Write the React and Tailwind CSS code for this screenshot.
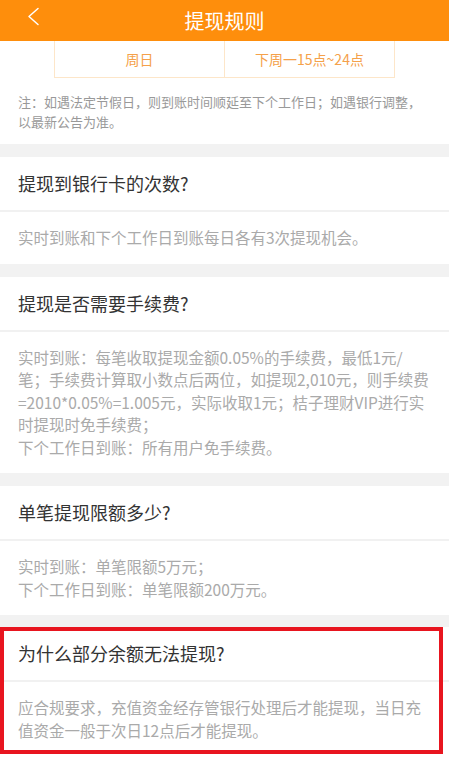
import React from "react";

const font = { fontFamily: '"PingFang SC", "Noto Sans CJK SC", sans-serif' };

function Section({ title, lines }) {
  return (
    <div className="bg-white">
      <div className="h-[55px] flex items-center px-[18px] text-[18px] text-[#333] border-b-2 border-[#f1f1f1]">
        {title}
      </div>
      <div className="px-[18px] pt-[14px] pb-[15px] text-[15.5px] leading-[22.5px] text-[#aaa]">
        {lines.map((line, i) => (
          <div key={i} className="whitespace-nowrap">{line}</div>
        ))}
      </div>
    </div>
  );
}

export default function App() {
  return (
    <div className="w-[449px] min-h-[764px] bg-white" style={font}>
      <div className="relative h-[41px] bg-[#fe8e0c] flex items-center justify-center">
        <svg className="absolute left-[27px] top-[7px]" width="13" height="19" viewBox="0 0 13 19" fill="none">
          <polyline points="11,1.5 2,9.5 11,17.5" stroke="#fff" strokeWidth="1.5" strokeLinecap="round" strokeLinejoin="round" />
        </svg>
        <span className="text-[20px] text-white">提现规则</span>
      </div>

      <div className="bg-white pb-[12px]">
        <div className="ml-[54px] w-[341px] h-[37px] flex border border-t-0 border-[#fde6c9] text-[14px] text-[#f5a14a]">
          <div className="w-[170px] flex items-center justify-center border-r border-[#fde6c9]">周日</div>
          <div className="flex-1 flex items-center justify-center">下周一15点~24点</div>
        </div>
        <div className="mt-[14px] px-[18px] text-[13px] leading-[20px] text-[#999]">
          <div className="whitespace-nowrap">注：如遇法定节假日，则到账时间顺延至下个工作日；如遇银行调整，</div>
          <div className="whitespace-nowrap">以最新公告为准。</div>
        </div>
      </div>

      <div className="h-[13px] bg-[#f2f2f2]" />
      <Section title="提现到银行卡的次数?" lines={["实时到账和下个工作日到账每日各有3次提现机会。"]} />

      <div className="h-[13px] bg-[#f2f2f2]" />
      <Section
        title="提现是否需要手续费?"
        lines={[
          "实时到账：每笔收取提现金额0.05%的手续费，最低1元/",
          "笔；手续费计算取小数点后两位，如提现2,010元，则手续费",
          "=2010*0.05%=1.005元，实际收取1元；桔子理财VIP进行实",
          "时提现时免手续费；",
          "下个工作日到账：所有用户免手续费。",
        ]}
      />

      <div className="h-[13px] bg-[#f2f2f2]" />
      <Section
        title="单笔提现限额多少?"
        lines={["实时到账：单笔限额5万元；", "下个工作日到账：单笔限额200万元。"]}
      />

      <div className="h-[12px] bg-[#f2f2f2]" />
      <div className="relative">
        <Section
          title="为什么部分余额无法提现?"
          lines={["应合规要求，充值资金经存管银行处理后才能提现，当日充", "值资金一般于次日12点后才能提现。"]}
        />
        <div className="absolute left-0 top-0 w-[443px] h-[127px] border-4 border-[#e8151f] pointer-events-none" />
      </div>
    </div>
  );
}
